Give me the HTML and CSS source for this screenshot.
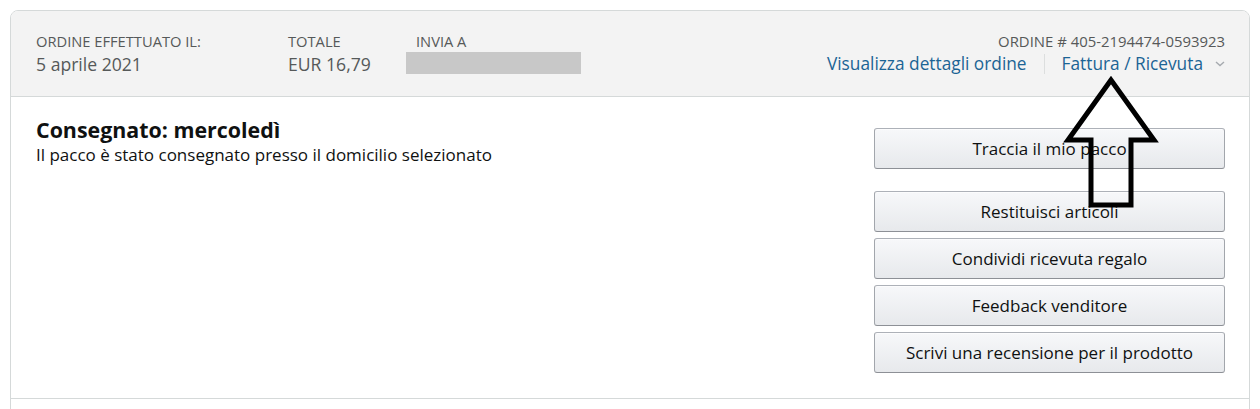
FILE: index.html
```html
<!DOCTYPE html>
<html lang="it">
<head>
    <meta charset="UTF-8">
    <meta name="viewport" content="width=device-width, initial-scale=1.0">
    <title>I miei ordini</title>
    <link rel="stylesheet" href="styles.css">
</head>
<body>
    <div class="order">
        <div class="order-header">
            <div class="col col-date">
                <p class="label">ORDINE EFFETTUATO IL:</p>
                <p class="value">5 aprile 2021</p>
            </div>
            <div class="col col-total">
                <p class="label">TOTALE</p>
                <p class="value">EUR 16,79</p>
            </div>
            <div class="col col-ship">
                <p class="label">INVIA A</p>
                <div class="redacted"></div>
            </div>
            <div class="col col-id">
                <p class="label label-id">ORDINE # 405-2194474-0593923</p>
                <p class="links">
                    <a href="#">Visualizza dettagli ordine</a>
                    <span class="sep"></span>
                    <a href="#">Fattura / Ricevuta</a>
                    <svg class="chevron" width="10" height="6" viewBox="0 0 10 6"><path d="M1 1l4 3.5L9 1" fill="none" stroke="#a6aaaf" stroke-width="1.4"/></svg>
                </p>
            </div>
        </div>
        <div class="order-body">
            <div class="status">
                <h2>Consegnato: mercoledì</h2>
                <p>Il pacco è stato consegnato presso il domicilio selezionato</p>
            </div>
            <div class="actions">
                <button class="btn btn-track">Traccia il mio pacco</button>
                <button class="btn">Restituisci articoli</button>
                <button class="btn">Condividi ricevuta regalo</button>
                <button class="btn">Feedback venditore</button>
                <button class="btn">Scrivi una recensione per il prodotto</button>
            </div>
        </div>
        <div class="order-next"></div>
    </div>

    <!-- arrow drawn over the page -->
    <svg class="arrow" width="1260" height="409" viewBox="0 0 1260 409">
        <polygon points="1111,80 1068,140 1091,140 1091,205 1131,205 1131,140 1154,140" fill="none" stroke="#000" stroke-width="5" stroke-linejoin="miter"/>
    </svg>
</body>
</html>
```

FILE: styles.css
```css
body {
    margin: 0;
    background: #fff;
    font-family: 'Open Sans', 'Liberation Sans', sans-serif;
    color: #0f1111;
    position: relative;
    height: 409px;
    overflow: hidden;
}

p {
    margin: 0;
}

.order {
    margin: 10px 10px 0 10px;
    border: 1px solid #d5d9d9;
    border-radius: 8px;
    overflow: hidden;
}

.order-header {
    display: flex;
    background: #f3f3f3;
    border-bottom: 1px solid #d5d9d9;
    padding: 20px 24px 0 25px;
    height: 65px;
}

.col {
    display: flex;
    flex-direction: column;
}

.label {
    font-size: 14.7px;
    color: #565959;
    line-height: 20px;
}

.label-id {
    font-size: 14.9px;
}

.value {
    font-size: 17.6px;
    color: #565959;
    line-height: 24px;
    margin-top: 1px;
}

.col-date {
    width: 252px;
}

.col-total {
    width: 118px;
}

.col-ship {
    padding-left: 10px;
}

.redacted {
    width: 175px;
    height: 22px;
    background: #c8c8c8;
    margin: 1px 0 0 -10px;
}

.col-id {
    margin-left: auto;
    align-items: flex-end;
}

.links {
    display: flex;
    align-items: center;
    font-size: 17.3px;
    line-height: 24px;
    margin-top: 1px;
}

.links a {
    color: #1b6495;
    text-decoration: none;
}

.sep {
    width: 1px;
    height: 20px;
    background: #dcdede;
    margin: 0 17px;
}

.chevron {
    margin-left: 12px;
}

.order-body {
    display: flex;
    justify-content: space-between;
    padding: 19px 24px 25px 25px;
}

.status h2 {
    margin: 0;
    font-size: 21.4px;
    line-height: 28px;
    font-weight: 700;
    color: #0f1111;
}

.status p {
    font-size: 17px;
    line-height: 22px;
}

.actions {
    width: 351px;
    display: flex;
    flex-direction: column;
    gap: 6px;
    padding-top: 12px;
}

.btn {
    height: 41px;
    font-family: inherit;
    font-size: 17px;
    color: #0f1111;
    background: linear-gradient(to bottom, #f7f8fa, #e7e9ec);
    border: 1px solid #adb1b8;
    border-color: #adb1b8 #a2a6ac #8d9096;
    border-radius: 3px;
    box-shadow: 0 1px 0 rgba(255, 255, 255, 0.6) inset;
    cursor: pointer;
}

.btn-track {
    margin-bottom: 16px;
}

.order-next {
    border-top: 1px solid #d5d9d9;
    height: 40px;
}

.arrow {
    position: absolute;
    top: 0;
    left: 0;
    pointer-events: none;
}
```
